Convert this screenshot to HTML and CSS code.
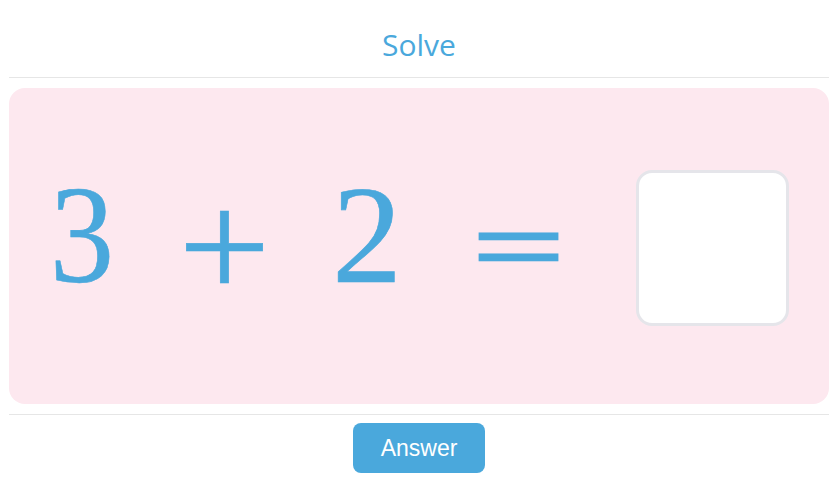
FILE: index.html
```html
<!DOCTYPE html>
<html>
<head>
<meta charset="utf-8">
<link rel="stylesheet" href="styles.css">
</head>
<body>
<div class="page">
  <header class="title">Solve</header>
  <div class="rule"></div>
  <main class="card">
    <div class="eq">
      <span class="sym three">3</span>
      <span class="sym plus">+</span>
      <span class="sym">2</span>
      <span class="sym eqsign">=</span>
      <div class="answer-box"></div>
    </div>
  </main>
  <div class="rule"></div>
  <footer class="actions">
    <button class="answer-btn">Answer</button>
  </footer>
</div>
</body>
</html>
```
FILE: styles.css
```css
html, body {
  margin: 0;
  padding: 0;
  background: #ffffff;
}
.page {
  width: 820px;
  margin-left: 9px;
  display: flex;
  flex-direction: column;
}
.title {
  height: 77px;
  display: flex;
  align-items: center;
  justify-content: center;
  padding-top: 12px;
  box-sizing: border-box;
  font-family: "Open Sans", sans-serif;
  font-size: 30px;
  color: #4aa8dc;
}
.rule {
  height: 1px;
  background: #e6e6e6;
}
.card {
  margin-top: 10px;
  height: 316px;
  background: #fde8ef;
  border-radius: 16px;
  display: flex;
  align-items: center;
}
.eq {
  display: flex;
  align-items: center;
  padding-left: 38px;
  gap: 68px;
}
.sym {
  display: block;
  font-family: "Liberation Serif", "Times New Roman", serif;
  font-size: 140px;
  line-height: 1;
  color: #4aa8dc;
  padding-bottom: 22px;
  -webkit-text-stroke: 0.6px #4aa8dc;
}
.three {
  transform: scaleX(0.92);
}
.plus {
  transform-origin: 50% 69px;
  transform: translateY(12px) scale(1.17, 1.1);
  -webkit-text-stroke: 0.6px #4aa8dc;
}
.eqsign {
  margin-left: 9px;
  transform-origin: 50% 70px;
  transform: translateY(11px) scale(1.17, 0.76);
  -webkit-text-stroke: 3px #4aa8dc;
}
.answer-box {
  margin-left: 10px;
  width: 153px;
  height: 156px;
  box-sizing: border-box;
  border: 3px solid #e5e5ea;
  border-radius: 16px;
  background: #ffffff;
  margin-top: 3px;
}
.card + .rule {
  margin-top: 10px;
}
.actions {
  display: flex;
  justify-content: center;
  padding-top: 8px;
}
.answer-btn {
  width: 132px;
  height: 50px;
  border: none;
  border-radius: 8px;
  background: #4aa8dc;
  color: #ffffff;
  font-family: "Liberation Sans", Arial, sans-serif;
  font-size: 23px;
  padding: 0;
}
```
